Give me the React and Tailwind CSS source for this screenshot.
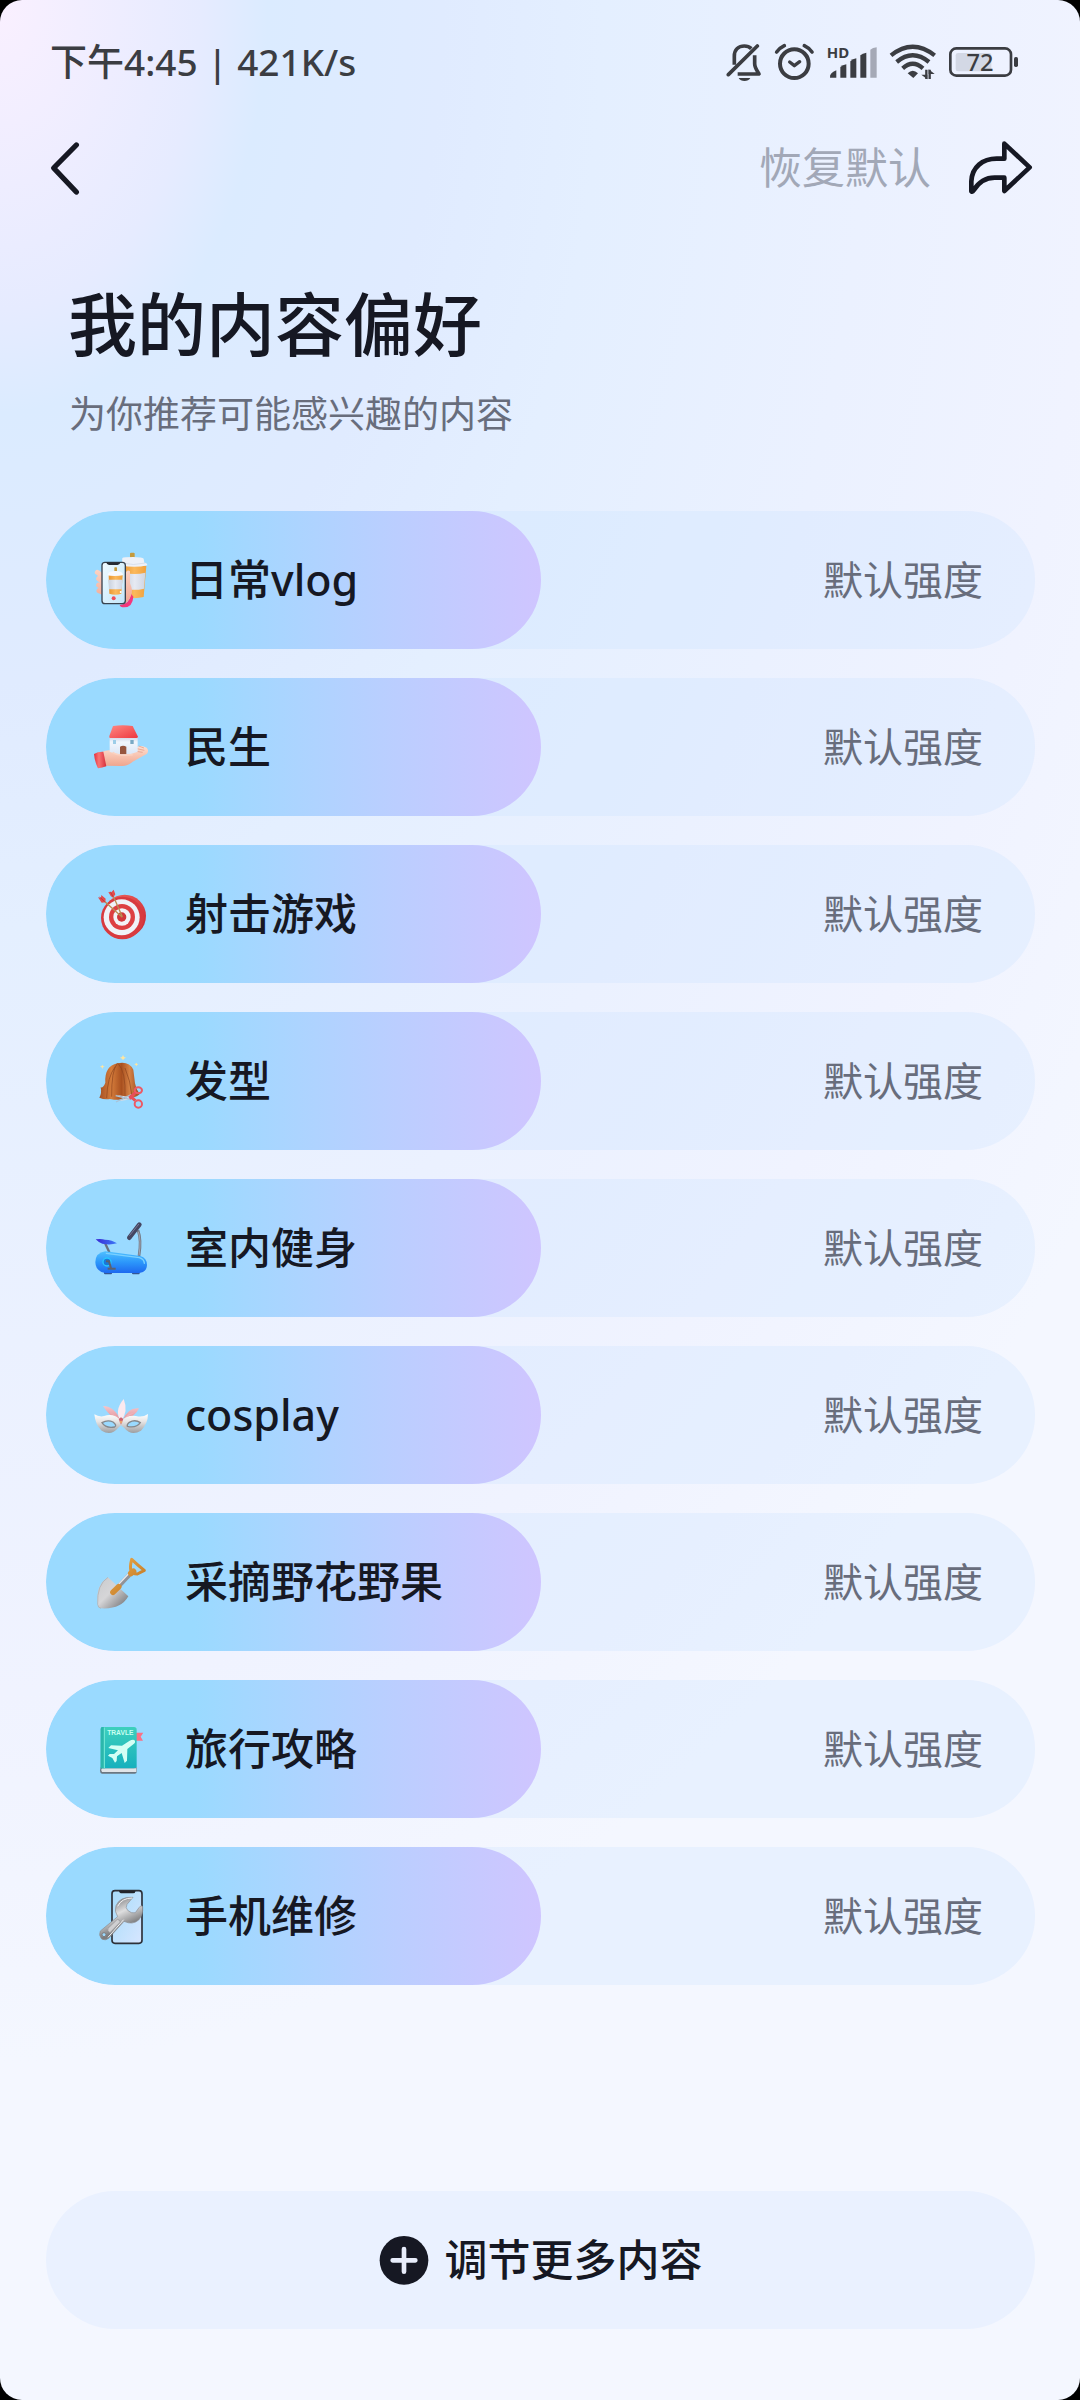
import { useState } from 'react';

const INK = '#161823';
const STATUS = '#3b3d42';

function BellOffIcon() {
  return (
    <svg viewBox="75 66 111 117" className="h-[39px] w-[37px]" fill="none" stroke={STATUS} strokeWidth="11">
      <path d="M82 161 L169 75" strokeLinecap="round" />
      <path d="M100 131 V106 C100 86 113 75 130 75 C139 75 146 78 151 83" />
      <path d="M161 103 V128 C161 139 167 147 174 159 H110" strokeLinejoin="round" />
      <path d="M113 171 H148 C143 183 118 183 113 171 Z" fill={STATUS} stroke="none" />
    </svg>
  );
}

function AlarmIcon() {
  return (
    <svg viewBox="222 66 123 114" className="h-[38px] w-[41px]" fill="none" stroke={STATUS} strokeLinecap="round">
      <circle cx="283" cy="128" r="43" strokeWidth="12" />
      <path d="M269 123 L283 134 L299 122" strokeWidth="10" strokeLinejoin="round" />
      <path d="M230 93 Q240 80 253 74 M313 74 Q326 80 336 93" strokeWidth="11" />
    </svg>
  );
}

function SignalIcon() {
  return (
    <svg viewBox="372 48 156 150" className="h-[50px] w-[52px]" fill={STATUS}>
      <text x="374" y="110" fontSize="45" fontWeight="700" fontFamily="'Noto Sans', sans-serif">HD</text>
      <path d="M384 170 Q382 156 403 148 V170 Z" />
      <path d="M415 170 V138 Q422 132 433 130 V170 Z" />
      <path d="M445 170 V121 Q452 114 463 112 V170 Z" />
      <path d="M475 170 V103 Q482 97 493 95 V170 Z" />
      <path d="M505 170 V86 Q512 80 524 79 V170 Z" fill="#a5a9b6" />
    </svg>
  );
}

function WifiIcon() {
  return (
    <svg viewBox="561 69 144 114" className="h-[38px] w-[48px]" fill="none" stroke={STATUS} strokeWidth="13">
      <path d="M567 106 Q632 54 698 106" />
      <path d="M584 126 Q632 86 681 126" />
      <path d="M602 145 Q632 118 663 145" />
      <path d="M617 160 Q632 144 648 160 L634 174 Z" fill={STATUS} stroke="none" />
      <path d="M673 149 V177 M683 149 V177" strokeWidth="7" />
      <path d="M676 178 L658 164 H676 Z M680 148 L698 162 H680 Z" fill={STATUS} stroke="none" />
    </svg>
  );
}

function BatteryIcon() {
  return (
    <svg viewBox="744 72 213 102" className="h-[34px] w-[71px]" fill={STATUS}>
      <rect x="751" y="82" width="182" height="82" rx="18" fill="none" stroke={STATUS} strokeWidth="8" />
      <rect x="767" y="96" width="107" height="55" rx="7" fill="#d3d8e5" />
      <rect x="942" y="108" width="12" height="30" rx="5" />
      <text x="840" y="150" fontSize="71" textAnchor="middle" fontWeight="500" fontFamily="'Noto Sans', sans-serif">72</text>
    </svg>
  );
}

function BackIcon() {
  return (
    <svg viewBox="144 417 99 171" className="h-[57px] w-[33px]" fill="none" stroke={INK} strokeWidth="16" strokeLinecap="round" strokeLinejoin="round">
      <path d="M226 432 L158 501 L226 573" />
    </svg>
  );
}

function ShareIcon() {
  return (
    <svg viewBox="804 360 195 168" className="h-[56px] w-[65px]" fill="none" stroke={INK} strokeWidth="14" strokeLinejoin="round">
      <path d="M913 371 L989 442 L913 513 V473 H884 C852 473 832 493 821 511 Q818 516 814 514 V484 C816 441 848 416 890 416 H913 Z" />
    </svg>
  );
}

function PlusIcon() {
  return (
    <svg viewBox="120 222 150 150" className="size-[50px]">
      <circle cx="195" cy="298" r="73" fill={INK} />
      <path d="M161 298 H229 M195 264 V332" stroke="#e8edfb" strokeWidth="14" strokeLinecap="round" />
    </svg>
  );
}

const ICON = 'size-[60px] shrink-0';

function VlogIcon() {
  return (
    <svg viewBox="33 60 180 180" className={ICON}>
      <defs>
        <linearGradient id="cup" x1="0" x2="1"><stop offset="0" stopColor="#e8952f" /><stop offset=".5" stopColor="#fbb95c" /><stop offset="1" stopColor="#f0a03a" /></linearGradient>
        <linearGradient id="sleeve" x1="0" x2="1"><stop offset="0" stopColor="#c8d0dc" /><stop offset=".5" stopColor="#e6eaf3" /><stop offset="1" stopColor="#cfd5e2" /></linearGradient>
        <linearGradient id="skin" gradientUnits="userSpaceOnUse" x1="0" y1="120" x2="0" y2="222"><stop offset="0" stopColor="#fbd3c4" /><stop offset="1" stopColor="#f2a48e" /></linearGradient>
        <linearGradient id="glass" x1="0" x2="1" y2="1"><stop offset="0" stopColor="#f0fbff" /><stop offset="1" stopColor="#c2e6fa" /></linearGradient>
      </defs>
      <rect x="150" y="68" width="14" height="24" rx="3" fill="#c59a3c" />
      <path d="M127 108 H199 L191 201 Q162 208 134 201 Z" fill="url(#cup)" />
      <path d="M132 128 Q165 136 196 128 L192 176 Q160 183 136 176 Z" fill="url(#sleeve)" />
      <path d="M127 84 Q130 81 160 81 Q188 81 191 86 L193 98 Q202 99 202 106 Q164 115 122 106 L122 101 L126 98 Z" fill="#eef1f8" />
      <path d="M125 99 Q160 108 197 99" stroke="#cdd6e4" strokeWidth="2" fill="none" />
      <path d="M119 225 Q150 221 153 191 L160 200 Q158 232 132 232 Q120 232 119 225 Z" fill="#f4377c" />
      <path d="M134 136 Q140 116 150 124 V160 Q160 182 153 197 Q145 222 120 223 L130 190 Z" fill="url(#skin)" />
      <g stroke="url(#skin)" strokeWidth="15" strokeLinecap="round">
        <path d="M52 127 L66 137" /><path d="M56 146 L68 155" /><path d="M56 165 L68 172" /><path d="M57 182 L68 187" />
      </g>
      <rect x="66" y="97" width="70" height="124" rx="9" fill="url(#glass)" stroke="#39434f" strokeWidth="4" />
      <path d="M79 97 H121 Q120 105 113 105 H87 Q80 105 79 97 Z" fill="#252b33" />
      <rect x="103" y="112" width="8" height="12" rx="2" fill="#c59a3c" />
      <path d="M86 136 H128 L124 191 Q106 197 88 191 Z" fill="url(#cup)" />
      <path d="M85 149 H128 L125 178 H87 Z" fill="url(#sleeve)" />
      <path d="M84 132 Q86 123 107 123 Q128 123 129 135 Q106 140 83 136 Z" fill="#f8f9fd" />
      <circle cx="101" cy="205" r="6" fill="#ee4d58" />
      <circle cx="122" cy="186" r="3" fill="#fff" />
    </svg>
  );
}

function HouseIcon() {
  return (
    <svg viewBox="153 651 180 180" className={ICON}>
      <defs>
        <linearGradient id="roof" x1="0" x2="1" y2="1"><stop offset="0" stopColor="#ff8983" /><stop offset="1" stopColor="#ed3840" /></linearGradient>
        <linearGradient id="wall" x1="0" x2="0" y2="1"><stop offset="0" stopColor="#c9d3e6" /><stop offset=".3" stopColor="#f1f6fd" /><stop offset="1" stopColor="#dae6f6" /></linearGradient>
        <linearGradient id="palm" x1="0" x2="0" y2="1"><stop offset="0" stopColor="#ffe0d1" /><stop offset="1" stopColor="#efa58e" /></linearGradient>
        <linearGradient id="cuff" x1="0" x2="1"><stop offset="0" stopColor="#e62f3c" /><stop offset=".4" stopColor="#f97474" /><stop offset="1" stopColor="#d62e3b" /></linearGradient>
      </defs>
      <path d="M184 757 Q204 747 222 754 L256 762 Q270 760 282 753 L291 742 Q303 734 320 743 Q328 751 321 761 L278 785 Q262 800 242 798 L193 797 Z" fill="url(#palm)" />
      <path d="M296 738 L312 744 M291 746 L313 751 M288 754 L308 757" stroke="#dd9480" strokeWidth="2" />
      <path d="M162 762 Q174 754 190 755 L199 799 Q187 804 174 805 Q164 785 162 762 Z" fill="url(#cuff)" />
      <path d="M209 710 H293 V755 Q250 774 209 755 Z" fill="url(#wall)" />
      <path d="M219 678 Q248 674 278 678 L294 710 Q293 714 289 714 H211 Q206 714 208 708 Z" fill="url(#roof)" />
      <path d="M240 740 Q249 735 259 740 V763 H240 Z" fill="#96553e" />
      <rect x="219" y="720" width="9" height="12" fill="#9dcde8" />
      <rect x="271" y="720" width="10" height="12" fill="#7aa9c4" />
      <path d="M218 757 Q235 769 278 764" stroke="#fbd3c2" strokeWidth="5" fill="none" />
    </svg>
  );
}

function TargetIcon() {
  return (
    <svg viewBox="33 72 180 180" className={ICON}>
      <defs>
        <linearGradient id="rim" x1="0" x2="1" y2="1"><stop offset="0" stopColor="#f0675f" /><stop offset="1" stopColor="#c92532" /></linearGradient>
      </defs>
      <circle cx="134" cy="168" r="64" fill="url(#rim)" />
      <circle cx="127" cy="174" r="64" fill="#d83a3f" />
      <circle cx="125" cy="172" r="54" fill="#f0f2f8" />
      <circle cx="126" cy="171" r="39" fill="#dd3f42" />
      <circle cx="126" cy="171" r="26" fill="#f3f3f8" />
      <circle cx="125" cy="171" r="14" fill="#d2373b" />
      <path d="M68 119 L127 172 M97 102 L127 170" stroke="#b98d52" strokeWidth="4" />
      <path d="M54 112 L63 113 L64 105 L77 116 L76 127 L65 128 Z" fill="#e34b4c" />
      <path d="M85 96 L94 97 L101 89 L106 103 L99 113 L92 108 Z" fill="#e34b4c" />
      <path d="M59 111 L74 125 M91 95 L99 110" stroke="#a93134" strokeWidth="2" />
    </svg>
  );
}

function HairIcon() {
  return (
    <svg viewBox="33 573 180 180" className={ICON}>
      <defs>
        <linearGradient id="hair" x1="0" x2="1"><stop offset="0" stopColor="#a55125" /><stop offset=".3" stopColor="#d47c3b" /><stop offset=".55" stopColor="#a9501f" /><stop offset=".75" stopColor="#d58245" /><stop offset="1" stopColor="#97471d" /></linearGradient>
      </defs>
      <path d="M112 610 Q147 602 160 629 L165 670 Q168 688 179 702 Q168 713 154 712 Q122 724 90 717 Q73 720 58 713 Q66 700 62 682 Q70 684 76 668 Q73 618 112 610 Z" fill="url(#hair)" />
      <path d="M112 610 Q94 632 95 710 M114 610 Q138 635 135 711 M106 620 Q82 650 80 714 M135 624 Q151 660 156 708" stroke="#8d421c" strokeWidth="2" fill="none" />
      <path d="M106 704 L150 711 L152 718 L108 725 L140 714 Z" fill="#d4dce5" />
      <path d="M108 726 L154 704 M107 707 L153 719" stroke="#a9c3d8" strokeWidth="4" />
      <path d="M149 716 L165 698 M149 707 L166 722" stroke="#e84e59" strokeWidth="9" />
      <ellipse cx="175" cy="691" rx="11" ry="9" fill="none" stroke="#ed5964" strokeWidth="6" />
      <ellipse cx="175" cy="732" rx="11" ry="11" fill="none" stroke="#ed5964" strokeWidth="6" />
      <path d="M129 585 L132 591 L138 593 L132 596 L129 601 L126 596 L120 593 L126 591 Z M67 614 L69 618 L74 620 L69 622 L67 627 L65 622 L60 620 L65 618 Z M169 608 L171 611 L175 613 L171 615 L169 619 L167 615 L163 613 L167 611 Z" fill="#ffe6a0" />
    </svg>
  );
}

function BikeIcon() {
  return (
    <svg viewBox="33 54 180 180" className={ICON}>
      <defs>
        <linearGradient id="bike" x1="0" x2="0" y2="1"><stop offset="0" stopColor="#4fc0ff" /><stop offset=".5" stopColor="#2c97fb" /><stop offset="1" stopColor="#1e69ef" /></linearGradient>
        <linearGradient id="seat" x1="0" x2="1"><stop offset="0" stopColor="#3a2ad4" /><stop offset="1" stopColor="#3c7af7" /></linearGradient>
      </defs>
      <path d="M76 131 L88 157" stroke="#69707f" strokeWidth="7" />
      <path d="M174 91 Q185 120 177 168" stroke="#737884" strokeWidth="8" fill="none" />
      <path d="M175 95 Q184 120 177 166" stroke="#b9bdc8" strokeWidth="2" fill="none" />
      <path d="M148 113 L178 74" stroke="#454762" strokeWidth="14" strokeLinecap="round" />
      <path d="M149 106 L176 73" stroke="#77799a" strokeWidth="3" strokeLinecap="round" />
      <path d="M47 118 Q65 116 75 119 Q97 120 111 130 Q90 136 67 131 Q54 126 47 118 Z" fill="url(#seat)" />
      <rect x="72" y="213" width="24" height="10" rx="3" fill="#345696" />
      <rect x="156" y="213" width="23" height="10" rx="3" fill="#345696" />
      <path d="M76 154 L181 168 Q201 174 201 195 Q200 217 178 219 H76 Q46 214 46 186 Q47 158 76 154 Z" fill="url(#bike)" />
      <path d="M79 160 L178 173 Q193 178 193 190" stroke="#7bd1ff" strokeWidth="4" fill="none" strokeLinecap="round" />
      <circle cx="81" cy="186" r="12" fill="#1978da" stroke="#27c7ff" strokeWidth="4" />
      <path d="M78 184 H87 L93 205 M83 206 H107" stroke="#5b6170" strokeWidth="6" fill="none" />
    </svg>
  );
}

function MaskIcon() {
  return (
    <svg viewBox="33 555 180 180" className={ICON}>
      <defs>
        <linearGradient id="mask" x1="0" x2="0" y2="1"><stop offset="0" stopColor="#ffffff" /><stop offset=".4" stopColor="#e6e4e4" /><stop offset="1" stopColor="#9d9d9f" /></linearGradient>
        <linearGradient id="petal" x1="0" x2="0" y2="1"><stop offset="0" stopColor="#f6c7cd" /><stop offset="1" stopColor="#dd8c93" /></linearGradient>
      </defs>
      <path d="M119 663 Q92 654 69 618 Q105 620 120 659 Z M127 663 Q143 621 177 625 Q166 651 127 663 Z" fill="url(#petal)" />
      <path d="M118 655 Q92 640 84 632 L112 650 M130 657 L145 643 L169 635 Z" fill="#efb1b8" />
      <path d="M123 664 Q101 633 131 597 Q146 634 123 664 Z" fill="#fbe9ef" />
      <path fillRule="evenodd" d="M43 643 Q60 654 81 646 Q104 642 123 661 Q145 643 168 648 Q188 653 204 642 Q204 670 183 692 Q154 710 133 684 L123 676 L114 684 Q93 710 65 692 Q46 675 43 643 Z M66 668 Q77 686 104 681 Q112 677 99 666 Q83 658 66 668 Z M142 679 Q169 685 181 668 Q165 657 148 667 Q140 674 142 679 Z" fill="url(#mask)" />
      <path d="M66 668 Q77 686 104 681 Q112 677 99 666 Q83 658 66 668 Z M142 679 Q169 685 181 668 Q165 657 148 667 Q140 674 142 679 Z" fill="none" stroke="#85888c" strokeWidth="4" />
      <path d="M116 657 L123 674 L130 657 L123 652 Z" fill="#cf6470" />
      <circle cx="123" cy="666" r="4" fill="#e8a06e" />
    </svg>
  );
}

function ShovelIcon() {
  return (
    <svg viewBox="33 66 180 180" className={ICON}>
      <defs>
        <linearGradient id="blade" x1="0" x2="1" y2="1"><stop offset="0" stopColor="#c9cacd" /><stop offset=".45" stopColor="#d6d6d8" /><stop offset="1" stopColor="#68686b" /></linearGradient>
        <linearGradient id="wood" gradientUnits="userSpaceOnUse" x1="90" y1="90" x2="190" y2="190"><stop offset="0" stopColor="#f0b04f" /><stop offset="1" stopColor="#bb701e" /></linearGradient>
      </defs>
      <path d="M84 142 L145 199 Q123 239 63 235 Q53 235 53 223 Q46 164 84 142 Z" fill="url(#blade)" />
      <path d="M84 142 Q50 164 53 223 Q54 234 63 235" fill="none" stroke="#a9aaae" strokeWidth="2" />
      <path d="M111 174 L148 135" stroke="#919297" strokeWidth="13" />
      <path d="M108 171 L145 132" stroke="#e9e9ec" strokeWidth="4" />
      <path d="M99 187 L116 170" stroke="url(#wood)" strokeWidth="17" strokeLinecap="round" />
      <path d="M155 88 Q149 111 153 122 Q157 132 172 132 L193 121 Q176 108 155 88 Z" fill="none" stroke="url(#wood)" strokeWidth="9" strokeLinejoin="round" />
      <path d="M153 130 L160 124" stroke="url(#wood)" strokeWidth="18" strokeLinecap="round" />
    </svg>
  );
}

function TravelIcon() {
  return (
    <svg viewBox="33 567 180 180" className={ICON}>
      <defs>
        <linearGradient id="book" x1="0" x2="0" y2="1"><stop offset="0" stopColor="#3ed0bd" /><stop offset="1" stopColor="#16b0bd" /></linearGradient>
      </defs>
      <path d="M168 608 H190 L182 620 L189 632 H168 Z" fill="#fa7287" />
      <path d="M62 712 H170 V726 Q170 731 164 731 H66 Q60 730 60 722 Z" fill="#6b7781" />
      <path d="M66 715 H169 V726 H66 Q61 720 66 715 Z" fill="#e0e4e8" />
      <path d="M67 591 H162 Q170 591 170 599 V709 Q170 715 162 715 H62 V597 Q62 591 67 591 Z" fill="url(#book)" />
      <path d="M62 597 Q62 591 67 591 H75 V715 H62 Z" fill="#2bb7ac" />
      <path d="M73 592 V715" stroke="#7aeedb" strokeWidth="3" />
      <text x="121" y="616" fontSize="20" textAnchor="middle" fontWeight="700" fontFamily="'Liberation Sans', sans-serif" fill="#c9fff2">TRAVLE</text>
      <path d="M163 630 Q169 637 160 643 L142 657 L141 692 L134 699 L125 669 L111 679 L110 693 L105 698 L97 684 L84 677 L89 672 L102 672 L114 661 L85 654 L93 646 L126 647 L149 632 Q158 627 163 630 Z" fill="#d4fff5" />
    </svg>
  );
}

function RepairIcon() {
  return (
    <svg viewBox="33 78 180 180" className={ICON}>
      <defs>
        <linearGradient id="screen" x1="0" x2="1" y2="1"><stop offset="0" stopColor="#a7dcfa" /><stop offset="1" stopColor="#d7e6ff" /></linearGradient>
        <linearGradient id="steel" gradientUnits="userSpaceOnUse" x1="110" y1="110" x2="150" y2="195"><stop offset="0" stopColor="#77777a" /><stop offset=".5" stopColor="#dededf" /><stop offset="1" stopColor="#7c7c7e" /></linearGradient>
      </defs>
      <rect x="96" y="92" width="90" height="158" rx="9" fill="url(#screen)" stroke="#2d3139" strokeWidth="5" />
      <path d="M117 92 H167 Q166 100 159 100 H126 Q118 100 117 92 Z" fill="#22252b" />
      <path d="M159 112 Q120 109 108 137 Q102 154 113 170 L61 213 Q55 226 65 237 Q76 243 86 235 L132 184 Q158 196 176 180 Q190 164 188 140 Q183 133 177 143 L166 158 Q155 162 143 151 Q135 143 141 133 Z" fill="url(#steel)" stroke="#8b8b8e" strokeWidth="2" />
      <path d="M157 114 Q125 114 113 139 M131 179 L84 232" stroke="#f3f3f4" strokeWidth="3" fill="none" />
      <path d="M112 178 Q119 179 121 186 L90 218 Q80 214 84 205 Z" fill="#cfcfd1" stroke="#8f8f92" strokeWidth="2" />
      <circle cx="72" cy="224" r="6" fill="#9bd9fd" stroke="#7f7f82" strokeWidth="3" />
    </svg>
  );
}

const TOPICS = [
  { id: 'vlog', name: '日常vlog', Icon: VlogIcon },
  { id: 'livelihood', name: '民生', Icon: HouseIcon },
  { id: 'shooter', name: '射击游戏', Icon: TargetIcon },
  { id: 'hair', name: '发型', Icon: HairIcon },
  { id: 'fitness', name: '室内健身', Icon: BikeIcon },
  { id: 'cosplay', name: 'cosplay', Icon: MaskIcon },
  { id: 'foraging', name: '采摘野花野果', Icon: ShovelIcon },
  { id: 'travel', name: '旅行攻略', Icon: TravelIcon },
  { id: 'repair', name: '手机维修', Icon: RepairIcon },
];

const DEFAULTS = Object.fromEntries(TOPICS.map((t) => [t.id, 50]));

function levelText(value) {
  if (value === 50) return '默认强度';
  return value > 50 ? '增强推荐' : '减弱推荐';
}

function TopicSlider({ topic, value, onChange }) {
  const { id, name, Icon } = topic;
  return (
    <li className="relative h-[138px] overflow-hidden rounded-full bg-[#c2deff]/25">
      <div
        className="absolute inset-y-0 left-0 rounded-full bg-linear-to-r from-[#9adaff] from-30% to-[#cfc5ff]"
        style={{ width: `${value}%` }}
      />
      <div className="relative flex h-full items-center pr-[52px] pl-[45px]">
        <Icon />
        <label htmlFor={id} className="ml-[34px] text-[43px] leading-[60px] font-medium text-[#161823]">
          {name}
        </label>
        <span className="ml-auto text-[40px] leading-[60px] text-[#686d7c]">{levelText(value)}</span>
      </div>
      <input
        id={id}
        type="range"
        min="0"
        max="100"
        value={value}
        onChange={(e) => onChange(id, Number(e.target.value))}
        className="absolute inset-0 h-full w-full cursor-pointer opacity-0"
      />
    </li>
  );
}

export default function App() {
  const [values, setValues] = useState(DEFAULTS);
  const change = (id, value) => setValues((v) => ({ ...v, [id]: value }));

  return (
    <div className="min-h-screen bg-black font-['Noto_Sans','Noto_Sans_CJK_SC',sans-serif]" lang="zh-CN">
      <div className="flex min-h-screen flex-col rounded-[22px] bg-[#f4f7ff] bg-[radial-gradient(124%_86%_at_0%_0%,#faf0ff_0%,#e6ebff_15%,#dbebff_20%,#e0ebff_33%,#e4efff_45%,#ebf1ff_65%,#f0f3ff_82%,#f4f7ff_100%)] pr-[45px] pl-[46px]">
        <div className="flex h-[124px] items-center justify-between pl-1 text-[37px] font-medium text-[#3b3d42]">
          <span>下午4:45 | 421K/s</span>
          <div className="flex items-center gap-[11px] pr-[16px]">
            <BellOffIcon />
            <AlarmIcon />
            <SignalIcon />
            <WifiIcon />
            <BatteryIcon />
          </div>
        </div>

        <header className="flex h-[88px] items-center">
          <button type="button" aria-label="返回" className="ml-[3px]">
            <BackIcon />
          </button>
          <button
            type="button"
            onClick={() => setValues(DEFAULTS)}
            className="ml-auto text-[43px] leading-[60px] text-[#a2a8b7]"
          >
            恢复默认
          </button>
          <button type="button" aria-label="分享" className="mr-[2px] ml-[37px]">
            <ShareIcon />
          </button>
        </header>

        <main className="flex grow flex-col">
          <h1 className="mt-[72px] pl-[22px] text-[69px] leading-[80px] font-medium text-[#161823]">我的内容偏好</h1>
          <p className="mt-[26px] pl-[23px] text-[37px] leading-[48px] text-[#686d7c]">为你推荐可能感兴趣的内容</p>

          <ul className="mt-[73px] flex flex-col gap-[29px]">
            {TOPICS.map((topic) => (
              <TopicSlider key={topic.id} topic={topic} value={values[topic.id]} onChange={change} />
            ))}
          </ul>

          <div className="mt-auto pt-[60px] pb-[71px]">
            <button
              type="button"
              className="flex h-[138px] w-full items-center justify-center gap-[16px] rounded-full bg-[#eaf1ff] text-[43px] font-medium text-[#161823]"
            >
              <PlusIcon />
              调节更多内容
            </button>
          </div>
        </main>
      </div>
    </div>
  );
}
